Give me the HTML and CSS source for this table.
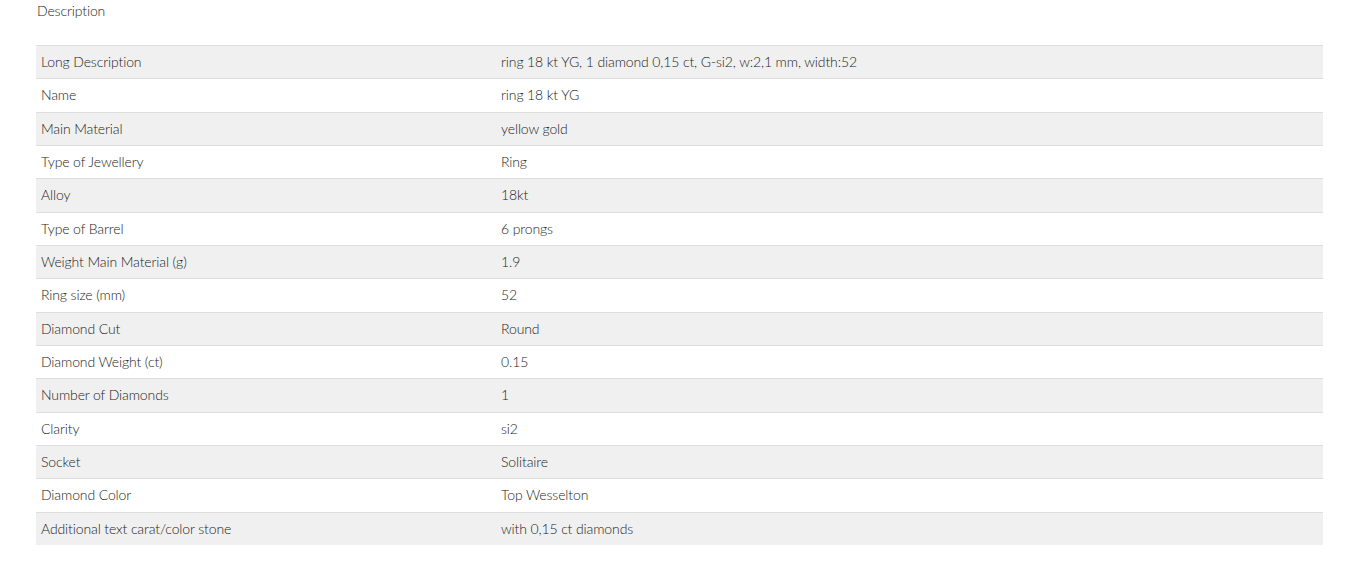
FILE: index.html
```html
<!DOCTYPE html>
<html>
<head>
<meta charset="utf-8">
<link rel="stylesheet" href="styles.css">
</head>
<body>
<div class="panel">
  <div class="title">Description</div>
  <table class="specs">
    <tbody>
      <tr><td class="label">Long Description</td><td>ring 18 kt YG, 1 diamond 0,15 ct, G-si2, w:2,1 mm, width:52</td></tr>
      <tr><td class="label">Name</td><td>ring 18 kt YG</td></tr>
      <tr><td class="label">Main Material</td><td>yellow gold</td></tr>
      <tr><td class="label">Type of Jewellery</td><td>Ring</td></tr>
      <tr><td class="label">Alloy</td><td>18kt</td></tr>
      <tr><td class="label">Type of Barrel</td><td>6 prongs</td></tr>
      <tr><td class="label">Weight Main Material (g)</td><td>1.9</td></tr>
      <tr><td class="label">Ring size (mm)</td><td>52</td></tr>
      <tr><td class="label">Diamond Cut</td><td>Round</td></tr>
      <tr><td class="label">Diamond Weight (ct)</td><td>0.15</td></tr>
      <tr><td class="label">Number of Diamonds</td><td>1</td></tr>
      <tr><td class="label">Clarity</td><td>si2</td></tr>
      <tr><td class="label">Socket</td><td>Solitaire</td></tr>
      <tr><td class="label">Diamond Color</td><td>Top Wesselton</td></tr>
      <tr><td class="label">Additional text carat/color stone</td><td>with 0,15 ct diamonds</td></tr>
    </tbody>
  </table>
</div>
</body>
</html>
```
FILE: styles.css
```css
html, body {
  margin: 0;
  padding: 0;
  background: #fff;
}
body {
  font-family: Lato, "Open Sans", "Liberation Sans", sans-serif;
  font-size: 14px;
  font-weight: 300;
  letter-spacing: -0.12px;
  color: #221d22;
}
.panel {
  padding: 0 29px 0 36px;
}
.title {
  height: 45px;
  padding: 1px 0 0 1px;
  box-sizing: border-box;
  line-height: 20px;
  font-size: 14px;
}
.specs {
  width: 100%;
  border-collapse: collapse;
  border-spacing: 0;
}
.specs tr {
  height: 33.33px;
}
.specs td {
  border-top: 1px solid #dedede;
  padding: 0 5px;
  vertical-align: middle;
  line-height: 20px;
}
.specs td.label {
  width: 450px;
}
.specs tr:nth-child(odd) {
  background: #f0f0f0;
}
```
